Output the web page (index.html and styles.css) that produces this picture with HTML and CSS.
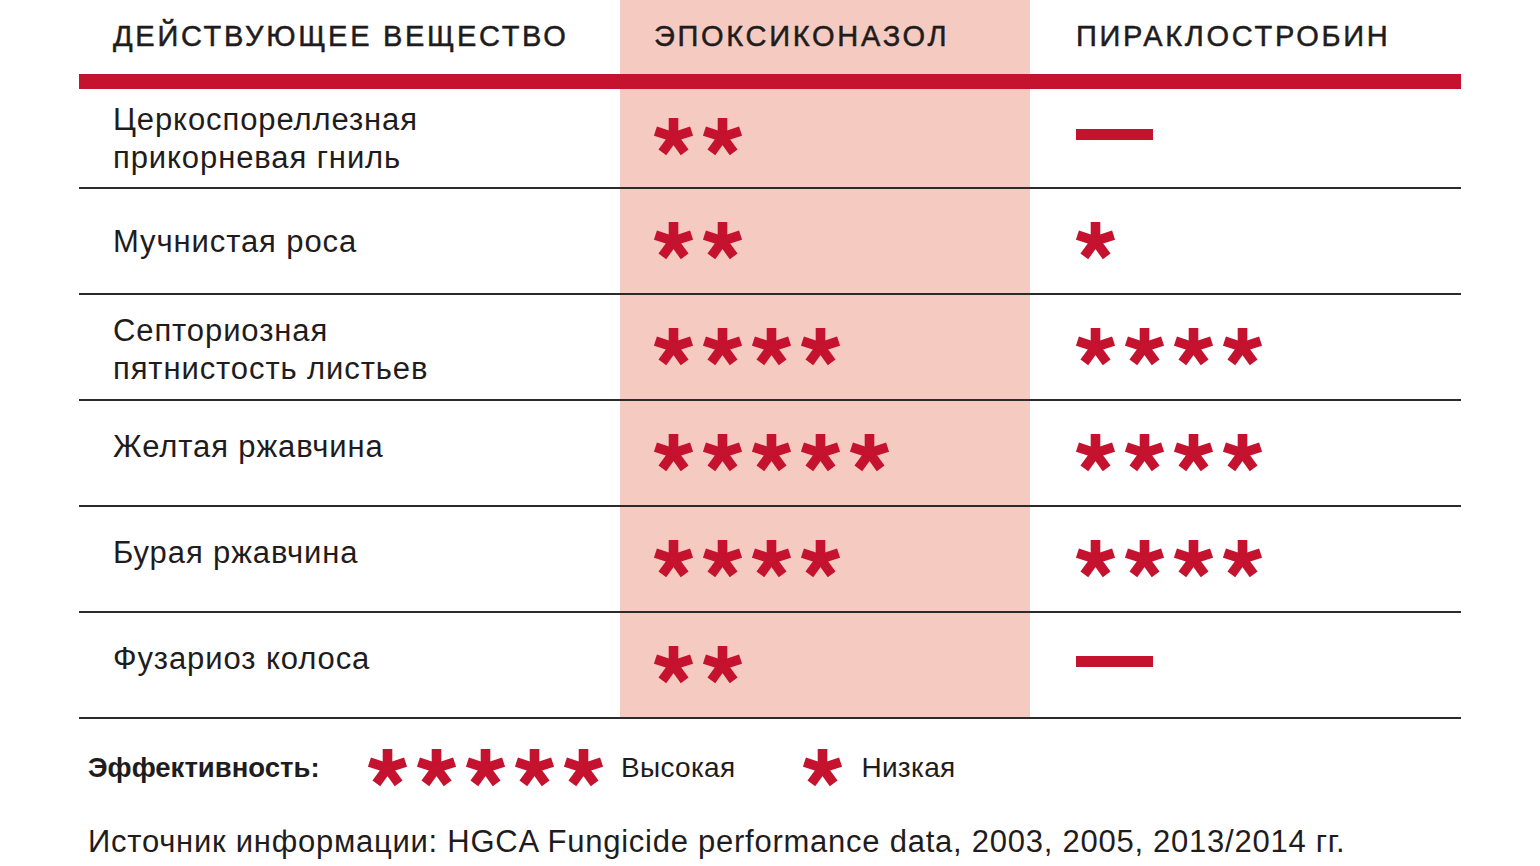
FILE: index.html
```html
<!DOCTYPE html>
<html lang="ru">
<head>
<meta charset="utf-8">
<title>Эффективность</title>
<link rel="stylesheet" href="styles.css">
</head>
<body>
<svg width="0" height="0" class="defs">
  <defs>
    <g id="ast">
      <rect x="-4.8" y="-19" width="9.6" height="19"/>
      <rect x="-4.8" y="-19" width="9.6" height="19" transform="rotate(72)"/>
      <rect x="-4.8" y="-19" width="9.6" height="19" transform="rotate(144)"/>
      <rect x="-4.8" y="-19" width="9.6" height="19" transform="rotate(216)"/>
      <rect x="-4.8" y="-19" width="9.6" height="19" transform="rotate(288)"/>
      <circle r="5"/>
    </g>
  </defs>
</svg>
<div class="page">
  <div class="table">
    <div class="cell head c1">ДЕЙСТВУЮЩЕЕ ВЕЩЕСТВО</div>
    <div class="cell head c2">ЭПОКСИКОНАЗОЛ</div>
    <div class="cell head c3">ПИРАКЛОСТРОБИН</div>

    <div class="cell name first">Церкоспореллезная<br>прикорневая гниль</div>
    <div class="cell c2 first"><span class="stars" data-n="2"></span></div>
    <div class="cell c3 first"><span class="dash"></span></div>

    <div class="cell name mid">Мучнистая роса</div>
    <div class="cell c2"><span class="stars" data-n="2"></span></div>
    <div class="cell c3"><span class="stars" data-n="1"></span></div>

    <div class="cell name two">Септориозная<br>пятнистость листьев</div>
    <div class="cell c2"><span class="stars" data-n="4"></span></div>
    <div class="cell c3"><span class="stars" data-n="4"></span></div>

    <div class="cell name up">Желтая ржавчина</div>
    <div class="cell c2"><span class="stars" data-n="5"></span></div>
    <div class="cell c3"><span class="stars" data-n="4"></span></div>

    <div class="cell name up">Бурая ржавчина</div>
    <div class="cell c2"><span class="stars" data-n="4"></span></div>
    <div class="cell c3"><span class="stars" data-n="4"></span></div>

    <div class="cell name up">Фузариоз колоса</div>
    <div class="cell c2"><span class="stars" data-n="2"></span></div>
    <div class="cell c3"><span class="dash"></span></div>
  </div>

  <div class="legend">
    <span class="legend-label">Эффективность:</span>
    <span class="stars legend-high" data-n="5"></span>
    <span class="legend-text">Высокая</span>
    <span class="stars legend-low" data-n="1"></span>
    <span class="legend-text">Низкая</span>
  </div>

  <p class="source">Источник информации: HGCA Fungicide performance data, 2003, 2005, 2013/2014 гг.</p>
</div>
<script src="script.js"></script>
</body>
</html>
```
FILE: script.js
```js
document.querySelectorAll('.stars').forEach(function (el) {
  var n = parseInt(el.getAttribute('data-n'), 10);
  var html = '';
  for (var i = 0; i < n; i++) {
    html += '<svg class="star" viewBox="-19.5 -19 39 38"><use href="#ast"/></svg>';
  }
  el.innerHTML = html;
});
```
FILE: styles.css
```css
html, body {
  margin: 0;
  padding: 0;
  background: #ffffff;
}
body {
  font-family: "Liberation Sans", Arial, sans-serif;
  color: #1f1c1d;
}
.defs {
  position: absolute;
  width: 0;
  height: 0;
}
.page {
  padding-left: 79px;
  width: 1382px;
}
.table {
  display: grid;
  grid-template-columns: 541px 410px 431px;
}
.cell {
  display: flex;
  align-items: center;
  box-sizing: border-box;
  height: 106px;
  border-bottom: 2px solid #2b2b2b;
}
.cell.first {
  height: 100px;
}
.head {
  height: 89px;
  border-bottom: 15px solid #c4122f;
  font-size: 29px;
  letter-spacing: 2.7px;
  -webkit-text-stroke: 0.5px #1f1c1d;
  padding-bottom: 2px;
}
.c1, .name {
  padding-left: 34px;
}
.c2 {
  background: #f5cbc1;
  padding-left: 34px;
}
.c3 {
  padding-left: 46px;
}
.name {
  font-size: 31px;
  line-height: 38px;
  letter-spacing: 0.9px;
}
.name.first {
  padding-top: 2px;
}
.name.mid {
  padding-top: 2px;
}
.name.two {
  padding-top: 6px;
}
.name.up {
  padding-bottom: 12px;
}
.stars {
  display: flex;
  gap: 10px;
}
.c2.first .stars {
  margin-bottom: 3px;
}
.star {
  width: 39px;
  height: 38px;
  fill: #c4122f;
  display: block;
}
.dash {
  display: block;
  width: 77px;
  height: 11px;
  background: #c4122f;
  margin-bottom: 8px;
}
.legend {
  display: flex;
  align-items: center;
  margin-top: 30px;
  padding-left: 9px;
  height: 38px;
}
.legend-label {
  font-weight: bold;
  font-size: 27.5px;
  width: 280px;
}
.legend-text {
  font-size: 28px;
  letter-spacing: 0.3px;
}
.legend-high {
  margin-right: 18px;
}
.legend-low {
  margin-left: 68px;
  margin-right: 19px;
}
.source {
  margin: 37px 0 0 9px;
  font-size: 31px;
  line-height: 36px;
  letter-spacing: 0.75px;
}
```
